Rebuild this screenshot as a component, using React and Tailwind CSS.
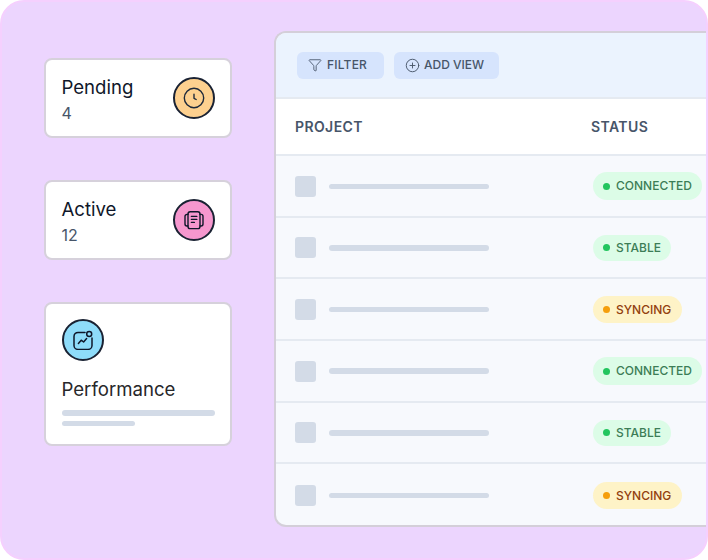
import React from "react";
import { Funnel, CirclePlus } from "lucide-react";

const font = { fontFamily: "Inter, 'Liberation Sans', sans-serif" };

function ClockIcon() {
  return (
    <svg width="22" height="22" viewBox="0 0 22 22" fill="none" stroke="#1e293b" strokeWidth="1.4" strokeLinecap="round" strokeLinejoin="round">
      <circle cx="11" cy="11" r="9.7" />
      <path d="M11 7.2v4.1l2.2 1.2" />
    </svg>
  );
}

function NotebookIcon() {
  return (
    <svg width="20" height="20" viewBox="0 0 20 20" fill="none" stroke="#0f172a" strokeWidth="1.4" strokeLinecap="round" strokeLinejoin="round">
      <rect x="4" y="1.8" width="12" height="16.8" rx="2.2" />
      <path d="M4 4.4H3A2 2 0 0 0 1 6.4v7.6a2 2 0 0 0 2 2h1" />
      <path d="M16 4.4h1a2 2 0 0 1 2 2v7.6a2 2 0 0 1-2 2h-1" />
      <path d="M7.4 6.4h5.4M7.4 9.4h5.4M7.4 12.4h3" />
    </svg>
  );
}

function ChartIcon() {
  return (
    <svg width="20" height="20" viewBox="0 0 20 20" fill="none" stroke="#0f172a" strokeWidth="1.5" strokeLinecap="round" strokeLinejoin="round">
      <path d="M12 2.4H5a4 4 0 0 0-4 4V15.4a4 4 0 0 0 4 4h10a4 4 0 0 0 4-4V8" />
      <circle cx="16.2" cy="4" r="2.5" />
      <path d="M5.4 13.4l2.8-3.2 2.4 1.8 3-3.4" />
    </svg>
  );
}

function CircleIcon({ bg, children }) {
  return (
    <div className={`flex h-[42px] w-[42px] shrink-0 items-center justify-center rounded-full border-2 border-[#1a2233] ${bg}`}>
      {children}
    </div>
  );
}

function StatCard({ title, value, bg, children }) {
  return (
    <div className="flex h-20 items-center justify-between rounded-lg border-2 border-[#d6d1db] bg-white pl-[15.5px] pr-[15px]">
      <div className="pt-[3px]">
        <div className="text-[18.6px] leading-[24px] text-[#0f172a]">{title}</div>
        <div className="mt-[2px] text-[16px] leading-[24px] text-[#475569]">{value}</div>
      </div>
      <CircleIcon bg={bg}>{children}</CircleIcon>
    </div>
  );
}

const styles = {
  CONNECTED: { pill: "bg-[#dcfce7] h-[28px] w-[109px]", dot: "bg-[#22c55e]", text: "text-[#3c7d56]" },
  STABLE: { pill: "bg-[#dcfce7] h-[26px] w-[78px]", dot: "bg-[#22c55e]", text: "text-[#3c7d56]" },
  SYNCING: { pill: "bg-[#fef3c7] h-[27px] w-[89px]", dot: "bg-[#f59e0b]", text: "text-[#92400e]" },
};

const rows = ["CONNECTED", "STABLE", "SYNCING", "CONNECTED", "STABLE", "SYNCING"];

function Row({ status }) {
  const s = styles[status];
  return (
    <div className="flex h-[61.65px] items-center border-b-2 border-[#e5eaf1] pl-[19px] pt-[1px] last:border-b-0">
      <div className="h-[21px] w-[21px] rounded-[3px] bg-[#d3dbe7]" />
      <div className="ml-[13px] h-[5.5px] w-40 rounded-full bg-[#d3dbe7]" />
      <div className={`ml-[104px] flex shrink-0 items-center gap-[6px] rounded-full pl-[10px] ${s.pill}`}>
        <span className={`h-[7px] w-[7px] rounded-full ${s.dot}`} />
        <span className={`text-[12px] font-medium tracking-[0px] ${s.text}`}>{status}</span>
      </div>
    </div>
  );
}

export default function App() {
  return (
    <div className="h-[560px] w-[708px] overflow-hidden bg-white" style={font}>
      <div className="flex h-[560px] w-[708px] overflow-hidden rounded-[24px] border-2 border-[#f5d0fe] bg-[#ecd5fe] pt-[29px]">
        <div className="ml-[42px] mt-[27px] flex w-[188px] shrink-0 flex-col gap-[42px]">
          <StatCard title="Pending" value="4" bg="bg-[#fdd08f]">
            <ClockIcon />
          </StatCard>
          <StatCard title="Active" value="12" bg="bg-[#f597ce]">
            <NotebookIcon />
          </StatCard>
          <div className="flex h-[144px] flex-col rounded-lg border-2 border-[#d6d1db] bg-white px-[15.5px] pt-[15px]">
            <CircleIcon bg="bg-[#8edcfa]">
              <ChartIcon />
            </CircleIcon>
            <div className="mt-[16px] text-[18.6px] leading-[24px] text-[#27272a]">Performance</div>
            <div className="mt-[9px] h-[5.5px] w-[153px] rounded-full bg-[#d3dbe7]" />
            <div className="mt-[5px] h-[5.5px] w-[73px] rounded-full bg-[#d3dbe7]" />
          </div>
        </div>

        <div className="ml-[42px] h-[496px] w-[500px] shrink-0 overflow-hidden rounded-l-xl border-2 border-r-0 border-[#d4cfd9] bg-[#f7f9fd]">
          <div className="flex h-[66px] items-center gap-[10px] border-b-2 border-[#e5eaf1] bg-[#ebf3fe] pl-[21px]">
            <div className="flex h-[27px] w-[87px] items-center gap-[5px] rounded-md bg-[#d6e4fd] pl-[11px] text-[12px] font-medium tracking-[0.2px] text-[#475569]">
              <Funnel size={14} strokeWidth={1.5} />
              FILTER
            </div>
            <div className="flex h-[27px] w-[105px] items-center gap-[4px] rounded-md bg-[#d6e4fd] pl-[11px] text-[12px] font-medium tracking-[0px] text-[#475569]">
              <CirclePlus size={15} strokeWidth={1.5} />
              ADD VIEW
            </div>
          </div>
          <div className="flex h-[57px] items-center border-b-2 border-[#e5eaf1] bg-white pl-[19px] text-[14px] font-semibold tracking-[0.4px] text-[#475569]">
            <span className="w-[296px]">PROJECT</span>
            <span>STATUS</span>
          </div>
          {rows.map((r, i) => (
            <Row key={i} status={r} />
          ))}
        </div>
      </div>
    </div>
  );
}
